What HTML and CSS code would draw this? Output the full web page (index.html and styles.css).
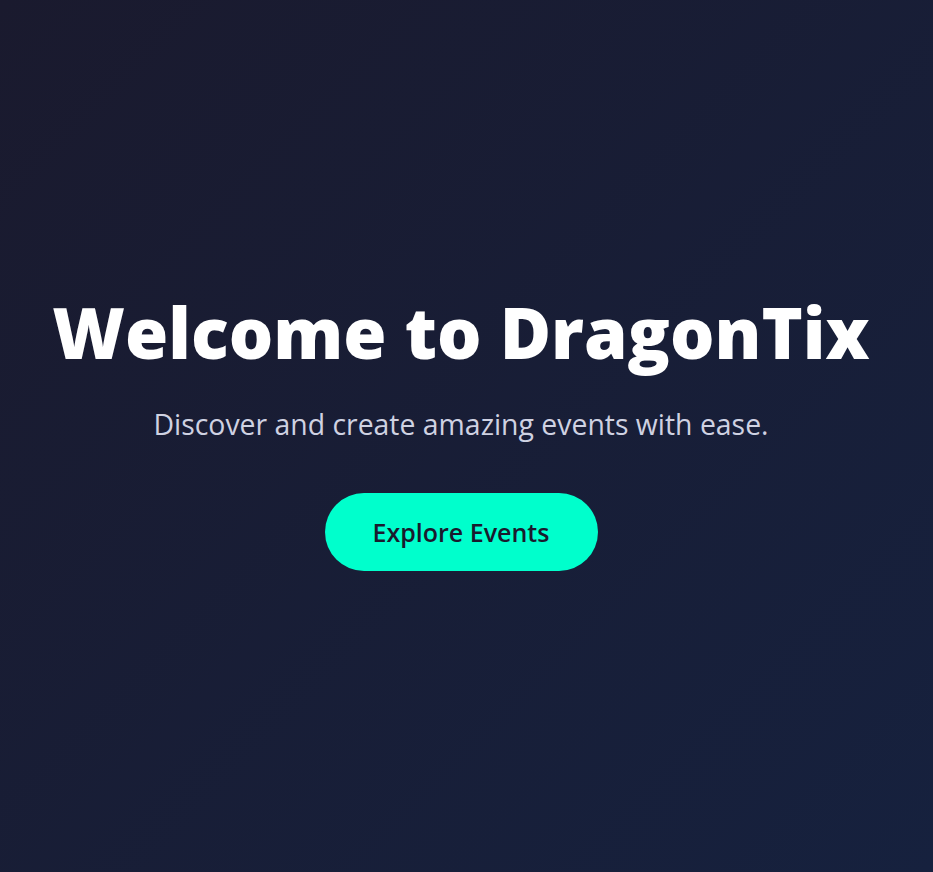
FILE: index.html
```html
<!DOCTYPE html>
<html lang="en">
<head>
<meta charset="utf-8">
<title>DragonTix</title>
<link rel="stylesheet" href="styles.css">
</head>
<body>
<main class="hero">
  <h1 class="hero-title">Welcome to DragonTix</h1>
  <p class="hero-subtitle">Discover and create amazing events with ease.</p>
  <a class="hero-button" href="#">Explore Events</a>
</main>
</body>
</html>
```

FILE: styles.css
```css
* { box-sizing: border-box; }
html, body { margin: 0; padding: 0; }
body {
  font-family: "Open Sans", "Noto Sans", sans-serif;
  background: linear-gradient(135deg, #1a1a2e 0%, #16213e 100%);
  min-height: 100vh;
  color: #fff;
}
.hero {
  min-height: 100vh;
  display: flex;
  flex-direction: column;
  align-items: center;
  justify-content: center;
  text-align: center;
  padding: 0 11px 11px 0;
}
.hero-title {
  margin: 0 0 29px;
  font-size: 70px;
  font-weight: 800;
  line-height: 84px;
  color: #fff;
}
.hero-subtitle {
  margin: 0 0 48px;
  font-size: 28.4px;
  color: #cfd2e2;
  line-height: 42.6px;
}
.hero-button {
  display: inline-block;
  width: 273px;
  padding: 20px 0;
  border-radius: 40px;
  background: #00ffcc;
  color: #1a1a2e;
  font-size: 25px;
  font-weight: 600;
  line-height: 38px;
  text-decoration: none;
}
```
